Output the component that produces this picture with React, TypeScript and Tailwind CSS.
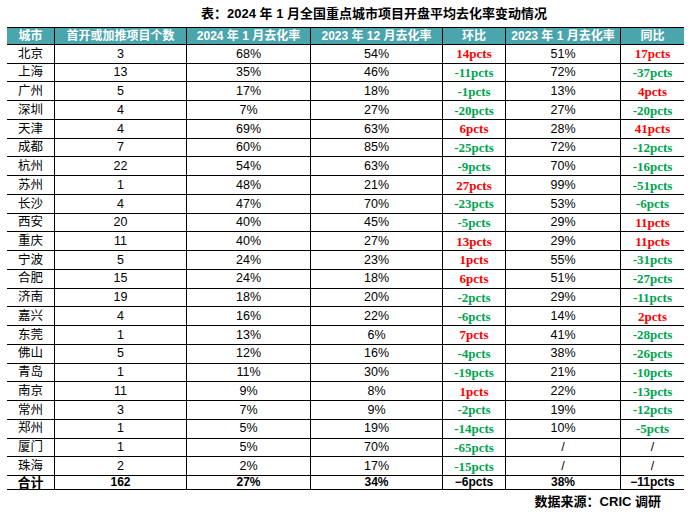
const CJK = '"Liberation Sans", "Noto Sans CJK SC", sans-serif';

type Row = [string, string, string, string, string, string, string];

const rows: Row[] = [
  ['北京', '3', '68%', '54%', '14pcts', '51%', '17pcts'],
  ['上海', '13', '35%', '46%', '-11pcts', '72%', '-37pcts'],
  ['广州', '5', '17%', '18%', '-1pcts', '13%', '4pcts'],
  ['深圳', '4', '7%', '27%', '-20pcts', '27%', '-20pcts'],
  ['天津', '4', '69%', '63%', '6pcts', '28%', '41pcts'],
  ['成都', '7', '60%', '85%', '-25pcts', '72%', '-12pcts'],
  ['杭州', '22', '54%', '63%', '-9pcts', '70%', '-16pcts'],
  ['苏州', '1', '48%', '21%', '27pcts', '99%', '-51pcts'],
  ['长沙', '4', '47%', '70%', '-23pcts', '53%', '-6pcts'],
  ['西安', '20', '40%', '45%', '-5pcts', '29%', '11pcts'],
  ['重庆', '11', '40%', '27%', '13pcts', '29%', '11pcts'],
  ['宁波', '5', '24%', '23%', '1pcts', '55%', '-31pcts'],
  ['合肥', '15', '24%', '18%', '6pcts', '51%', '-27pcts'],
  ['济南', '19', '18%', '20%', '-2pcts', '29%', '-11pcts'],
  ['嘉兴', '4', '16%', '22%', '-6pcts', '14%', '2pcts'],
  ['东莞', '1', '13%', '6%', '7pcts', '41%', '-28pcts'],
  ['佛山', '5', '12%', '16%', '-4pcts', '38%', '-26pcts'],
  ['青岛', '1', '11%', '30%', '-19pcts', '21%', '-10pcts'],
  ['南京', '11', '9%', '8%', '1pcts', '22%', '-13pcts'],
  ['常州', '3', '7%', '9%', '-2pcts', '19%', '-12pcts'],
  ['郑州', '1', '5%', '19%', '-14pcts', '10%', '-5pcts'],
  ['厦门', '1', '5%', '70%', '-65pcts', '/', '/'],
  ['珠海', '2', '2%', '17%', '-15pcts', '/', '/'],
];

const headers = ['城市', '首开或加推项目个数', '2024 年 1 月去化率', '2023 年 12 月去化率', '环比', '2023 年 1 月去化率', '同比'];

const grid = 'grid grid-cols-[47px_132px_124px_132px_63px_115px_64px] min-h-0 overflow-hidden';
const cell = 'flex items-center justify-center border-l border-black';

function Pct({ v }: { v: string }) {
  if (v === '/') return <span>/</span>;
  const down = v.startsWith('-');
  return (
    <span
      className={`font-bold text-[13px] ${down ? 'text-[#00a550]' : 'text-[#ff0000]'}`}
      style={{ fontFamily: '"Liberation Serif", serif' }}
    >
      {v}
    </span>
  );
}

export default function App() {
  return (
    <div className="w-[691px] h-[514px] bg-white text-black leading-none" style={{ fontFamily: CJK }}>
      <div className="h-[27px] flex items-center pl-[201px] text-[13px] font-bold">
        表：2024 年 1 月全国重点城市项目开盘平均去化率变动情况
      </div>
      <div className="ml-[7px] w-[677px]">
        <div className={`${grid} h-[18px] border-y border-black bg-[#4ba5ac] text-white text-[12px] font-bold`}>
          {headers.map((h, i) => (
            <div key={h} className={`flex items-center justify-center ${i > 0 ? 'border-l border-black' : ''}`}>
              {h}
            </div>
          ))}
        </div>
        <div className="grid grid-rows-[repeat(23,minmax(0,1fr))] h-[445px]">
          {rows.map((r) => (
            <div key={r[0]} className={`${grid} border-b border-black text-[12.5px]`}>
              <div className="flex items-center justify-center">{r[0]}</div>
              <div className={cell}>{r[1]}</div>
              <div className={cell}>{r[2]}</div>
              <div className={cell}>{r[3]}</div>
              <div className={cell}><Pct v={r[4]} /></div>
              <div className={cell}>{r[5]}</div>
              <div className={cell}><Pct v={r[6]} /></div>
            </div>
          ))}
          <div className={`${grid} border-b border-black text-[12px] font-bold`}>
            <div className="flex items-center justify-center text-[13px]">合计</div>
            <div className={cell}>162</div>
            <div className={cell}>27%</div>
            <div className={cell}>34%</div>
            <div className={cell}>−6pcts</div>
            <div className={cell}>38%</div>
            <div className={cell}>−11pcts</div>
          </div>
        </div>
      </div>
      <div className="h-[22px] flex items-center justify-end pr-[30px] text-[13px] font-bold">
        数据来源：CRIC 调研
      </div>
    </div>
  );
}
